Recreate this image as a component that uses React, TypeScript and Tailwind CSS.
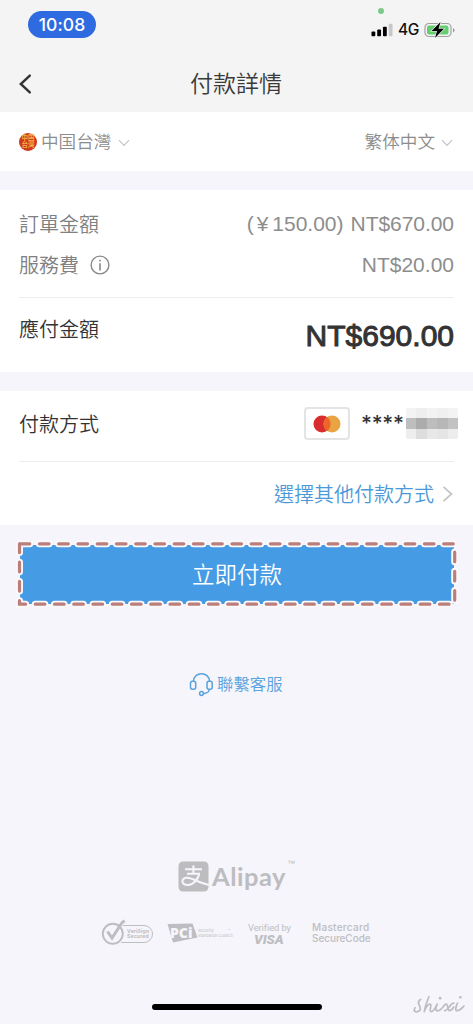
import React from 'react';

const cjk = "font-['Inter','Noto_Sans_CJK_TC',sans-serif]";

function Chevron() {
  return (
    <svg width="12" height="8" viewBox="0 0 12 8" fill="none" stroke="#c4c4c4" strokeWidth="1.2" className="mt-[1px]">
      <path d="M1 1.2 6 6.4 11 1.2" />
    </svg>
  );
}

function StatusBar() {
  return (
    <div className="relative flex h-[50px] justify-between pl-7 pr-[17px]">
      <div className="mt-[11px] flex h-[27px] w-[68px] items-center justify-center rounded-full bg-[#2f6be0] pt-[1px] text-[17.5px] font-medium tracking-[0.1px] text-white">
        10:08
      </div>
      <div className="absolute left-[378px] top-[8px] h-[6px] w-[6px] rounded-full bg-[#7cc98a]" />
      <div className="mt-[20px] flex h-[20px] items-center">
        <svg width="22" height="14" viewBox="0 0 23 14" className="mr-[5px]">
          <rect x="0.5" y="8.5" width="4" height="5" rx="1" />
          <rect x="6.5" y="6.5" width="4" height="7" rx="1" />
          <rect x="12.5" y="3.5" width="4" height="10" rx="1" />
          <rect x="18.5" y="0.5" width="4" height="13" rx="1" fill="#c8c8c8" />
        </svg>
        <span className="mr-[5px] text-[15.5px] font-medium tracking-[-0.4px] text-[#111]">4G</span>
        <svg width="32" height="18" viewBox="0 0 32 18" className="mb-[1px]">
          <rect x="1" y="2.5" width="26" height="13" rx="4" fill="none" stroke="#a0a0a0" strokeWidth="1.2" />
          <rect x="3" y="4.5" width="21.5" height="9" rx="2" fill="#63cd70" />
          <path d="M29 7v4.5c2-.8 2-3.7 0-4.5Z" fill="#999" />
          <path d="m16.5 1-9 9H13l-2 7 9-9.2h-5.5Z" fill="#000" stroke="#f4f4f4" strokeWidth="1.2" paintOrder="stroke" />
        </svg>
      </div>
    </div>
  );
}

function DashedFrame() {
  return (
    <svg width="443" height="68" viewBox="15 540 443 68" fill="none">
      <path d="M20.2 543.8H454.7V604.2H19.5V543.8" stroke="#fbf8fa" strokeWidth="7" strokeLinecap="round" strokeDasharray="9.6 9.65" />
      <path d="M20.2 543.8H454.7V604.2H19.5V543.8" stroke="#ba7f7d" strokeWidth="3.2" strokeLinecap="round" strokeDasharray="9.6 9.65" />
    </svg>
  );
}

function AlipayMark() {
  return (
    <svg width="31" height="31" viewBox="0 0 31 31" fill="none">
      <rect x="0.5" y="0.5" width="30" height="30" rx="4.5" fill="#bdbdc0" />
      <g stroke="#f5f5fb" strokeWidth="2.1">
        <path d="M7 8.2h17M15.4 4.4v8.3M9 12.8h13" />
        <path d="M21.4 12.8c-1.7 5.2-5.8 11.2-11.5 11.2-3.6 0-5.5-1.8-5.5-3.8 0-2.3 2.3-3.7 5.1-3.4 5.7.6 11.2 4.8 21.5 7.3" />
      </g>
    </svg>
  );
}

function Badges() {
  return (
    <div className="ml-[101px] mt-[27px] flex h-[27px] items-start text-[#bebec2]">
      <div className="relative flex h-[27px] w-[53px] items-start">
        <svg width="53" height="27" viewBox="0 0 53 27" fill="none" stroke="currentColor" className="absolute left-0 top-0">
          <path d="M22 6.5h21a8.5 8.5 0 0 1 0 17H20" strokeWidth="1" />
          <circle cx="11.8" cy="14.8" r="10" strokeWidth="1.9" />
          <path d="M6.5 12.5 11 19 20.5 4.5l3-3" strokeWidth="3" />
        </svg>
        <div className="ml-[26px] mt-[10px] text-[5.2px] font-bold leading-[5px] tracking-[0.1px]">
          <div>VeriSign</div>
          <div>Secured</div>
        </div>
      </div>
      <div className="ml-[13px] mt-[4px] flex w-[68px]">
        <div className="relative h-[20px] w-[31px] shrink-0">
          <svg width="31" height="20" viewBox="0 0 31 20" className="absolute left-0 top-0">
            <path d="M.5 1 25.5 0.5 30.5 14.5 6 19.5Z" fill="currentColor" />
          </svg>
          <span className="absolute left-[3px] top-[3px] font-['Open_Sans',sans-serif] text-[14px] font-extrabold leading-[13px] text-[#f5f5fb]">PCi</span>
        </div>
        <div className="mt-[5px] text-[4px] leading-[5px]">
          <div>Security<span className="ml-[14px]">™</span></div>
          <div className="whitespace-nowrap">Standards Council</div>
        </div>
      </div>
      <div className="ml-[13px] mt-[3px] w-[43px] whitespace-nowrap">
        <div className="font-['Roboto',sans-serif] text-[9.4px] leading-[11px] tracking-[-0.1px]">Verified by</div>
        <div className="ml-[6px] font-['Roboto',sans-serif] text-[13.5px] font-black italic leading-[12px]">VISA</div>
      </div>
      <div className="ml-[21px] mt-[3px] whitespace-nowrap text-[10px] font-medium leading-[10.5px]">
        <div className="tracking-[0.3px]">Mastercard</div>
        <div className="tracking-[-0.05px]">SecureCode</div>
      </div>
    </div>
  );
}

const mosaic = [
  'bg-[#f3f3f3]', 'bg-[#eeeeee]', 'bg-[#f3f3f3]', 'bg-[#f0f0f0]', 'bg-[#f3f3f3]',
  'bg-[#bebebe]', 'bg-[#acacac]', 'bg-[#bdbdbd]', 'bg-[#b7b7b7]', 'bg-[#c2c2c2]',
  'bg-[#eeeeee]', 'bg-[#dddddd]', 'bg-[#e8e8e8]', 'bg-[#e5e5e5]', 'bg-[#ededed]',
];

export default function App() {
  return (
    <div className={`${cjk} h-[1024px] w-[473px] overflow-hidden bg-[#f5f5fb]`}>
      <header className="h-[112px] bg-[#f4f4f4]">
        <StatusBar />
        <div className="flex h-[62px] items-center">
          <svg width="14" height="22" viewBox="0 0 14 22" fill="none" stroke="#333" strokeWidth="2.4" strokeLinecap="round" className="ml-[18px] mt-[5px]">
            <path d="M11.8 2.6 2.8 11l9 8.4" />
          </svg>
          <h1 className="ml-[158px] mt-[6px] text-[23px] font-[350] leading-[30px] text-[#3a3a3a]">付款詳情</h1>
        </div>
      </header>

      <div className="flex h-[59px] items-center justify-between bg-white pl-[19px] pr-[20px] pt-[2px] text-[17.6px] font-[350] text-[#8c8c8c]">
        <div className="flex items-center">
          <span className="flex h-[18px] w-[18px] flex-col items-center justify-center rounded-full bg-[#cf3720] text-[6.6px] font-bold leading-[7px] text-[#f5b13f]">
            <span>中国</span>
            <span>台灣</span>
          </span>
          <span className="ml-[4px] mr-[7px]">中国台灣</span>
          <Chevron />
        </div>
        <div className="flex items-center gap-[6px]">
          <span>繁体中文</span>
          <Chevron />
        </div>
      </div>

      <section className="mt-[19px] h-[182px] bg-white px-[19px] pt-[13px] text-[20px] text-[#8d8d8d]">
        <div className="flex h-[41px] items-center justify-between">
          <span className="mt-[2px] font-[350] text-[#808080]">訂單金額</span>
          <span className="flex font-['Liberation_Sans',sans-serif] text-[21px]">
            <span>(</span>
            <span className="ml-[3px]">¥</span>
            <span className="ml-[4px]">150.00)</span>
            <span className="ml-[7px] tracking-[-0.05px]">NT$670.00</span>
          </span>
        </div>
        <div className="flex h-[41px] items-center justify-between">
          <span className="mt-[2px] flex items-center font-[350] text-[#808080]">
            服務費
            <svg width="20" height="20" viewBox="0 0 20 20" fill="none" stroke="#888" strokeWidth="1.4" className="mb-[2px] ml-[11px]">
              <circle cx="10" cy="10" r="8.9" />
              <path d="M10 8.2v7.2M10 4.7v1.8" strokeWidth="1.6" />
            </svg>
          </span>
          <span className="font-['Liberation_Sans',sans-serif] text-[21px]">NT$20.00</span>
        </div>
        <div className="mt-[12px] flex h-[74px] justify-between border-t border-[#ededed] text-[#333]">
          <span className="mt-[17px] font-[350] leading-[30px]">應付金額</span>
          <span className="mt-[21px] font-['Liberation_Sans',sans-serif] text-[30px] leading-[34px] [-webkit-text-stroke:1px_#333]">NT$690.00</span>
        </div>
      </section>

      <section className="mt-[19px] h-[134px] bg-white px-[19px] text-[20px] font-[350] text-[#333]">
        <div className="flex h-[71px] items-center border-b border-[#ededed]">
          <span className="mb-[2px]">付款方式</span>
          <div className="mb-[5px] ml-auto flex h-[33px] w-[46px] items-center justify-center rounded-[4px] border-2 border-[#e4e4e4]">
            <svg width="28" height="18" viewBox="0 0 28 18">
              <circle cx="9" cy="9" r="8.5" fill="#d82c2d" />
              <circle cx="19" cy="9" r="8.5" fill="#e7a440" />
              <path d="M14 2.1a8.5 8.5 0 0 1 0 13.8 8.5 8.5 0 0 1 0-13.8Z" fill="#ee652b" />
            </svg>
          </div>
          <span className="mb-[5px] ml-[11px] mr-[3px] w-[42px] text-[21px] font-medium tracking-[-0.3px] text-[#333]">****</span>
          <div className="mb-[5px] mr-[-4px] grid h-[31px] w-[52px] grid-cols-5 grid-rows-[10px_11px_10px] overflow-hidden rounded-[2px]">
            {mosaic.map((c, i) => <div key={i} className={c} />)}
          </div>
        </div>
        <div className="flex h-[63px] items-center justify-end text-[#4b99d8]">
          <span className="mt-[2px]">選擇其他付款方式</span>
          <svg width="12" height="18" viewBox="0 0 12 18" fill="none" stroke="#c4c4c4" strokeWidth="1.7" className="ml-[8px]">
            <path d="m1.5 1.8 8 7.2-8 7.2" />
          </svg>
        </div>
      </section>

      <div className="relative h-[83px] pl-[20px] pr-[19px] pt-[20px]">
        <button className="flex h-[59px] w-full items-center justify-center bg-[#469ce4] pt-[1px] text-[22.5px] font-[350] text-white">立即付款</button>
        <div className="absolute left-[15px] top-[15px]">
          <DashedFrame />
        </div>
      </div>

      <div className="ml-[189px] mt-[63px] flex h-[26px] items-center text-[#58a2dd]">
        <svg width="25" height="25" viewBox="0 0 25 25" fill="none" stroke="currentColor" strokeWidth="1.5">
          <path d="M4.5 9.5C4.5-1 20.5-1 20.5 9.5M20.5 17c-.4 3-2.8 4.5-6 4.5" />
          <rect x="1.5" y="9.2" width="5.2" height="8" rx="2" />
          <rect x="18" y="9.2" width="5.2" height="8" rx="2" />
          <circle cx="12.5" cy="21.5" r="1.9" />
        </svg>
        <span className="ml-[3px] mt-[1px] text-[16.4px] font-[350]">聯繫客服</span>
      </div>

      <div className="relative ml-[178px] mt-[164px] flex h-[31px] text-[#bdbdc0]">
        <AlipayMark />
        <span className="ml-[3px] font-['Lato',sans-serif] text-[25.5px] font-bold leading-[31px] tracking-[0.5px]">Alipay</span>
        <span className="absolute left-[109px] top-[-1px] font-['Liberation_Sans',sans-serif] text-[8px] leading-[8px]">™</span>
      </div>

      <Badges />

      <div className="relative mt-[58px] h-[17px]">
        <div className="ml-[152px] h-[6px] w-[170px] rounded-full bg-black" />
        <svg className="absolute left-[409px] top-[-10px]" width="61" height="24" viewBox="0 0 61 26" fill="none" stroke="#bdbdc2" strokeWidth="1.9" strokeLinecap="round" strokeLinejoin="round">
          <path d="M4 15c-2 3 0 5 3 4 4-1 3-5 1-8-1-3 0-4 2-5M19 3c-2 5-4 10-5 16 1-4 4-8 6-8 3 0-1 7 1 8 3 1 5-4 7-8-2 4-2 8 1 7 3 0 5-4 8-7 3-1 2 6 4 7 2 0 4-2 5-4M46 10c-4 0-6 8-10 8M50 10c-2 4-3 9 0 8 3 0 5-3 7-5" />
          <path d="M31 4.5h.3M53 3.5h.3" strokeWidth="2.8" />
        </svg>
      </div>
    </div>
  );
}
